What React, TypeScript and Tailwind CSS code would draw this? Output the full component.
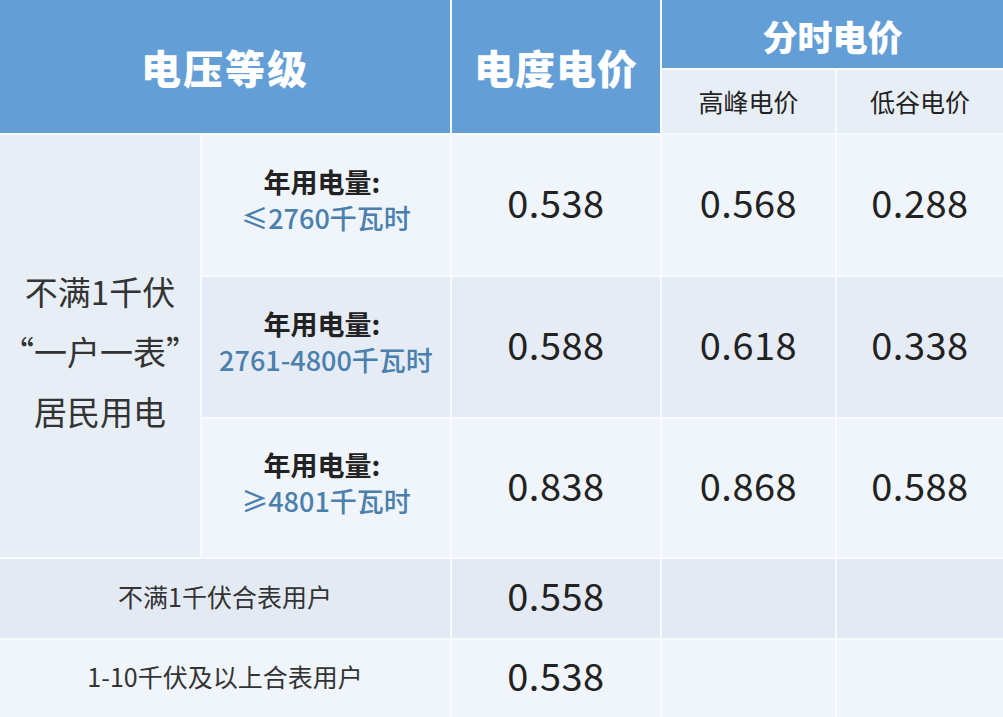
const font = { fontFamily: '"Noto Sans CJK SC", "Noto Sans", sans-serif' };

const usage = [
  { range: '≤2760千瓦时', price: '0.538', peak: '0.568', valley: '0.288', bg: 'bg-[#f0f5fb]' },
  { range: '2761-4800千瓦时', price: '0.588', peak: '0.618', valley: '0.338', bg: 'bg-[#e6ecf5]' },
  { range: '≥4801千瓦时', price: '0.838', peak: '0.868', valley: '0.588', bg: 'bg-[#f0f5fb]' },
];

function Num({ value, bg }: { value: string; bg: string }) {
  return (
    <div className={`flex items-center justify-center ${bg} text-[38px] text-[#222] tracking-[0.5px] pb-[8px]`}>
      {value}
    </div>
  );
}

export default function App() {
  return (
    <div
      style={font}
      className="w-[1003px] h-[717px] overflow-hidden bg-[#f8fbfe] grid grid-cols-[200px_248px_208px_173px_1fr] grid-rows-[68px_63px_140px_140px_138px_79px_1fr] gap-[2px]"
    >
      {/* header */}
      <div className="col-span-2 row-span-2 bg-[#639ed6] flex items-center justify-center text-white text-[40px] font-black tracking-[2px]">
        电压等级
      </div>
      <div className="row-span-2 bg-[#639ed6] flex items-center justify-center text-white text-[40px] font-black tracking-[1px]">
        电度电价
      </div>
      <div className="col-span-2 bg-[#639ed6] flex items-center justify-center text-white text-[35px] font-black pt-1">
        分时电价
      </div>
      <div className="bg-[#e8eef6] flex items-center justify-center text-[25px] text-[#222]">高峰电价</div>
      <div className="bg-[#e8eef6] flex items-center justify-center text-[25px] text-[#222]">低谷电价</div>

      {/* residential block */}
      <div className="row-span-3 bg-[#e7eef6] flex flex-col items-center justify-center text-[33px] leading-[60px] text-[#333] pt-[10px]">
        <span>不满1千伏</span>
        <span>“一户一表”</span>
        <span>居民用电</span>
      </div>
      {usage.map((u, i) => (
        <div key={i} className="contents">
          <div className={`${u.bg} flex flex-col items-center justify-center text-[27px] leading-[36px] pb-[10px]`}>
            <span className="font-semibold text-[#222] pr-[8px]">年用电量:</span>
            <span className="text-[#4b80ad] font-medium">{u.range}</span>
          </div>
          <Num value={u.price} bg={u.bg} />
          <Num value={u.peak} bg={u.bg} />
          <Num value={u.valley} bg={u.bg} />
        </div>
      ))}

      {/* combined meters */}
      <div className="col-span-2 bg-[#e4eaf3] flex items-center justify-center text-[25px] text-[#333] pb-[4px]">
        不满1千伏合表用户
      </div>
      <Num value="0.558" bg="bg-[#e4eaf3]" />
      <div className="bg-[#e4eaf3]" />
      <div className="bg-[#e4eaf3]" />

      <div className="col-span-2 bg-[#f0f5fb] flex items-center justify-center text-[25px] text-[#333] pb-[4px]">
        1-10千伏及以上合表用户
      </div>
      <Num value="0.538" bg="bg-[#f0f5fb]" />
      <div className="bg-[#f0f5fb]" />
      <div className="bg-[#f0f5fb]" />
    </div>
  );
}
